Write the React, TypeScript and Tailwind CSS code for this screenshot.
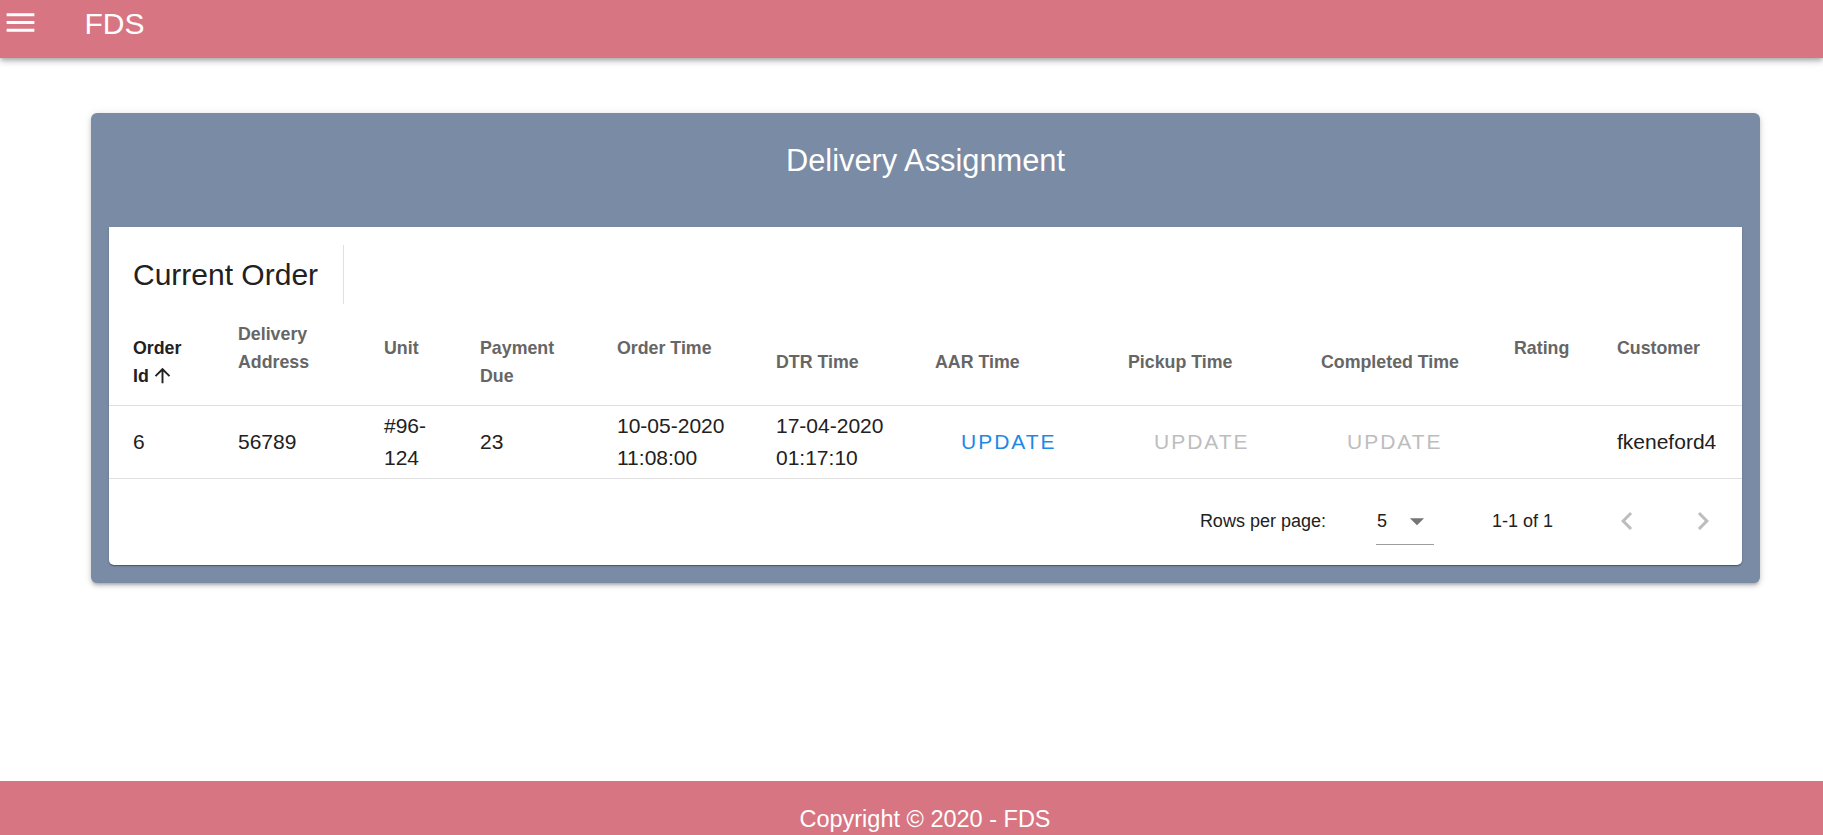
import React from "react";

const FONT = "font-['Liberation_Sans',Arial,sans-serif]";

function MenuIcon() {
  return (
    <svg width="37" height="37" viewBox="0 0 24 24" fill="#ffffff">
      <path d="M3 18h18v-2H3v2zm0-5h18v-2H3v2zm0-7v2h18V6H3z" />
    </svg>
  );
}

function ArrowUp() {
  return (
    <svg width="23" height="23" viewBox="0 0 24 24" fill="#212121" className="inline-block ml-[2px] -mt-[3px] align-middle">
      <path d="M4 12l1.41 1.41L11 7.83V20h2V7.83l5.58 5.59L20 12l-8-8-8 8z" />
    </svg>
  );
}

function Chevron({ dir }: { dir: "left" | "right" }) {
  return (
    <svg width="36" height="36" viewBox="0 0 24 24" fill="#bdbdbd">
      {dir === "left" ? (
        <path d="M15.41 7.41L14 6l-6 6 6 6 1.41-1.41L10.83 12z" />
      ) : (
        <path d="M10 6L8.59 7.41 13.17 12l-4.58 4.59L10 18l6-6z" />
      )}
    </svg>
  );
}

const gridCols =
  "grid grid-cols-[105px_146px_96px_137px_159px_159px_193px_193px_193px_103px_1fr] pl-[24px]";

function HeadCell({ lines, extra }: { lines: React.ReactNode[]; extra?: boolean }) {
  return (
    <div className="flex flex-col justify-center">
      {lines.map((l, i) => (
        <div key={i} className="leading-[27.5px] h-[27.5px] whitespace-nowrap">
          {l}
        </div>
      ))}
      {extra && <div className="h-[27.5px]" />}
    </div>
  );
}

function UpdateBtn({ active }: { active: boolean }) {
  return (
    <span
      className={`ml-[26px] text-[21px] tracking-[2px] leading-[32px] ${
        active ? "text-[#1e88e5]" : "text-[#bdbdbd]"
      }`}
    >
      UPDATE
    </span>
  );
}

export default function App() {
  return (
    <div className={`${FONT} h-screen flex flex-col bg-white overflow-hidden`}>
      {/* App bar */}
      <header className="h-[58px] shrink-0 bg-[#d77582] flex items-start relative z-10 shadow-[0_2px_4px_-1px_rgba(0,0,0,0.2),0_4px_5px_0_rgba(0,0,0,0.14),0_1px_10px_0_rgba(0,0,0,0.12)]">
        <div className="mt-[3.5px] ml-[1.5px]">
          <MenuIcon />
        </div>
        <div className="mt-[6px] ml-[46px] text-white text-[30px] leading-[36px]">FDS</div>
      </header>

      {/* Main */}
      <main className="flex-1">
        <div className="mt-[55px] ml-[91px] w-[1669px] bg-[#7a8ba5] rounded-[6px] shadow-[0_3px_3px_-2px_rgba(0,0,0,0.2),0_3px_4px_0_rgba(0,0,0,0.14),0_1px_8px_0_rgba(0,0,0,0.12)] px-[18px] pb-[18px]">
          <div className="h-[114px] pt-[30px] text-center text-white text-[30.8px] leading-[36px]">
            Delivery Assignment
          </div>

          <div className="bg-white rounded-b-[5px] shadow-[0_2px_1px_-1px_rgba(0,0,0,0.2),0_1px_1px_0_rgba(0,0,0,0.14),0_1px_3px_0_rgba(0,0,0,0.12)]">
            {/* Toolbar */}
            <div className="h-[93px] flex items-center pt-[2px]">
              <div className="h-[59px] flex items-center pl-[24px] pr-[25px] border-r border-[#e0e0e0] text-[30px] leading-[36px] text-[#212121]">
                Current Order
              </div>
            </div>

            {/* Header row */}
            <div
              className={`${gridCols} h-[86px] items-center border-b border-[#e0e0e0] text-[17.8px] font-bold text-[#666666]`}
            >
              <div className="text-[#212121]">
                <HeadCell
                  lines={[
                    "Order",
                    <span key="id">
                      Id
                      <ArrowUp />
                    </span>,
                  ]}
                />
              </div>
              <HeadCell lines={["Delivery", "Address"]} extra />
              <HeadCell lines={["Unit"]} extra />
              <HeadCell lines={["Payment", "Due"]} />
              <HeadCell lines={["Order Time"]} extra />
              <HeadCell lines={["DTR Time"]} />
              <HeadCell lines={["AAR Time"]} />
              <HeadCell lines={["Pickup Time"]} />
              <HeadCell lines={["Completed Time"]} />
              <HeadCell lines={["Rating"]} extra />
              <HeadCell lines={["Customer"]} extra />
            </div>

            {/* Body row */}
            <div
              className={`${gridCols} h-[73px] items-center border-b border-[#e0e0e0] text-[21px] leading-[32px] text-[#212121]`}
            >
              <div>6</div>
              <div>56789</div>
              <div>
                <div>#96-</div>
                <div>124</div>
              </div>
              <div>23</div>
              <div>
                <div>10-05-2020</div>
                <div>11:08:00</div>
              </div>
              <div>
                <div>17-04-2020</div>
                <div>01:17:10</div>
              </div>
              <div>
                <UpdateBtn active />
              </div>
              <div>
                <UpdateBtn active={false} />
              </div>
              <div>
                <UpdateBtn active={false} />
              </div>
              <div></div>
              <div>fkeneford4</div>
            </div>

            {/* Pagination */}
            <div className="h-[86px] pb-[2px] flex items-center justify-end pr-[21px] text-[18px] text-[#212121]">
              <span className="leading-[24px]">Rows per page:</span>
              <div className="ml-[50px] w-[58px] h-[48px] flex items-center justify-between border-b border-[#9e9e9e]">
                <span className="leading-[24px] ml-[1px]">5</span>
                <svg width="34" height="34" viewBox="0 0 24 24" fill="#757575">
                  <path d="M7 10l5 5 5-5z" />
                </svg>
              </div>
              <span className="ml-[58px] leading-[24px]">1-1 of 1</span>
              <div className="ml-[56px]">
                <Chevron dir="left" />
              </div>
              <div className="ml-[40px]">
                <Chevron dir="right" />
              </div>
            </div>
          </div>
        </div>
      </main>

      {/* Footer */}
      <footer className="h-[54px] shrink-0 bg-[#d77582] text-center text-white text-[23.5px] leading-[28px] pt-[24px] pl-[27px] overflow-hidden">
        Copyright © 2020 - FDS
      </footer>
    </div>
  );
}
